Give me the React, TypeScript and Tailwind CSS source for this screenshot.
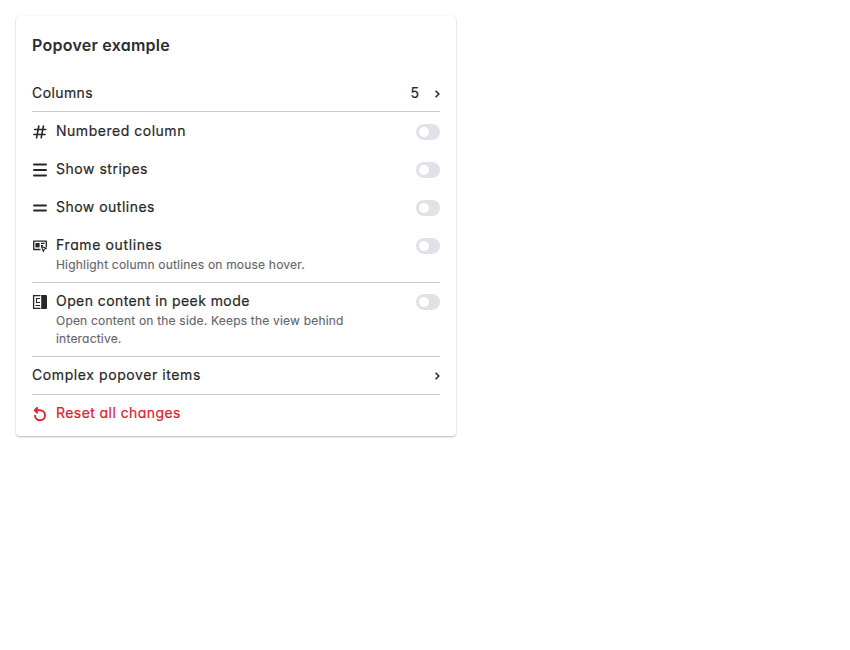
import type { ReactNode } from "react";

function Toggle() {
  return (
    <span className="mt-[4px] flex h-4 w-6 shrink-0 items-center rounded-full bg-[#e1e1e8] pl-[3px]">
      <span className="size-[10px] rounded-full bg-white" />
    </span>
  );
}

function Chevron() {
  return (
    <svg className="mt-[8px] ml-[14px] block" width="6" height="8" viewBox="0 0 6 8" fill="none" stroke="#2c2c31" strokeWidth="1.6">
      <path d="M1.6 .8 4.8 4 1.6 7.2" />
    </svg>
  );
}

function Icon({ children }: { children: ReactNode }) {
  return (
    <svg className="mt-[4px] mr-2 block shrink-0" width="16" height="16" viewBox="0 0 16 16" fill="none" stroke="currentColor">
      {children}
    </svg>
  );
}

const icons = {
  hash: (
    <g strokeWidth="1.6" strokeLinecap="round">
      <path d="M2.6 5.5h11.2M1.9 10.5h11.2M6.8 2 4.6 13.8M11.4 2 9.2 13.8" />
    </g>
  ),
  stripes: <path strokeWidth="2" strokeLinecap="round" d="M2 2.5h12M2 8h12M2 13.5h12" />,
  outlines: <path strokeWidth="1.8" strokeLinecap="round" d="M2 5.5h12M2 10.5h12" />,
  frame: (
    <g>
      <path strokeWidth="1.3" strokeLinejoin="round" d="M8.5 11.5H1.7V3.2h12.6v6" />
      <path fill="currentColor" stroke="none" d="M3.4 5h4.2v4.4H3.4z" />
      <path strokeWidth="1.1" d="M9 5.4h3.6M9 7.5h2" />
      <path strokeWidth="1.1" strokeLinejoin="round" d="M9.4 8.4l5 1.9-2.2 1-.8 2.3z" />
    </g>
  ),
  peek: (
    <g>
      <path strokeWidth="1.3" d="M8.5 1.7H1.6v12.6h6.9" />
      <path strokeWidth="1.1" d="M8 4.5H4.500v4H8M3.500 11.500H8" />
      <path fill="currentColor" stroke="none" d="M9.200 1h4.800a1 1 0 0 1 1 1v12a1 1 0 0 1-1 1H9.200z" />
    </g>
  ),
  reset: (
    <g strokeWidth="1.9" strokeLinejoin="round" strokeLinecap="round">
      <path d="M2.800 4.300H8a5 5 0 1 1-5 5.300M5.200 2 2.800 4.300l2.400 2.400" />
    </g>
  ),
};

type RowProps = {
  icon?: ReactNode;
  label: string;
  hint?: string;
  tracking?: string;
  className?: string;
  children?: ReactNode;
};

const divided = "-mb-px border-b border-[#c9c9d1]";

function Row({ icon, label, hint, tracking = "tracking-[0.52px]", className = "", children }: RowProps) {
  return (
    <div className={`flex items-start [-webkit-text-stroke:0.2px] ${className}`}>
      {icon && <Icon>{icon}</Icon>}
      <div className="grow">
        <div className={`text-[14px] leading-[22px] font-normal ${tracking}`}>{label}</div>
        {hint && (
          <div className="max-w-[300px] text-[12px] leading-[18px] tracking-[0.2px] text-[#66666e] [-webkit-text-stroke:0.15px]">{hint}</div>
        )}
      </div>
      {children}
    </div>
  );
}

export default function App() {
  return (
    <div className="min-h-[650px] bg-white p-4 font-['Inter',sans-serif] text-[#27272b] [font-feature-settings:'cv11']">
      <div className="h-[420px] w-[440px] rounded bg-white px-4 pt-4 shadow-[0_1px_2px_rgba(0,0,0,0.28),0_0_2px_rgba(0,0,0,0.06)]">
        <h1 className="mb-[15px] text-[16px] leading-[26px] font-semibold tracking-[0.25px] text-[#2c2c31]">Popover example</h1>
        <Row label="Columns" className="border-b border-[#c9c9c9] pt-[9px] pb-[7px]" tracking="tracking-[0.4px]">
          <span className="pr-px text-[14px] leading-[22px]">5</span>
          <Chevron />
        </Row>
        <Row icon={icons.hash} label="Numbered column" className="py-2"><Toggle /></Row>
        <Row icon={icons.stripes} label="Show stripes" className="py-2"><Toggle /></Row>
        <Row icon={icons.outlines} label="Show outlines" tracking="tracking-[0.48px]" className="py-2"><Toggle /></Row>
        <Row icon={icons.frame} label="Frame outlines" hint="Highlight column outlines on mouse hover." tracking="tracking-[0.62px]" className={`py-2 ${divided}`}><Toggle /></Row>
        <Row icon={icons.peek} label="Open content in peek mode" hint="Open content on the side. Keeps the view behind interactive." tracking="tracking-[0.42px]" className={`py-2 ${divided}`}><Toggle /></Row>
        <Row label="Complex popover items" tracking="tracking-[0.59px]" className={`py-2 ${divided}`}><Chevron /></Row>
        <Row icon={icons.reset} label="Reset all changes" tracking="tracking-[0.43px]" className="py-2 text-[#e0202c]" />
      </div>
    </div>
  );
}
